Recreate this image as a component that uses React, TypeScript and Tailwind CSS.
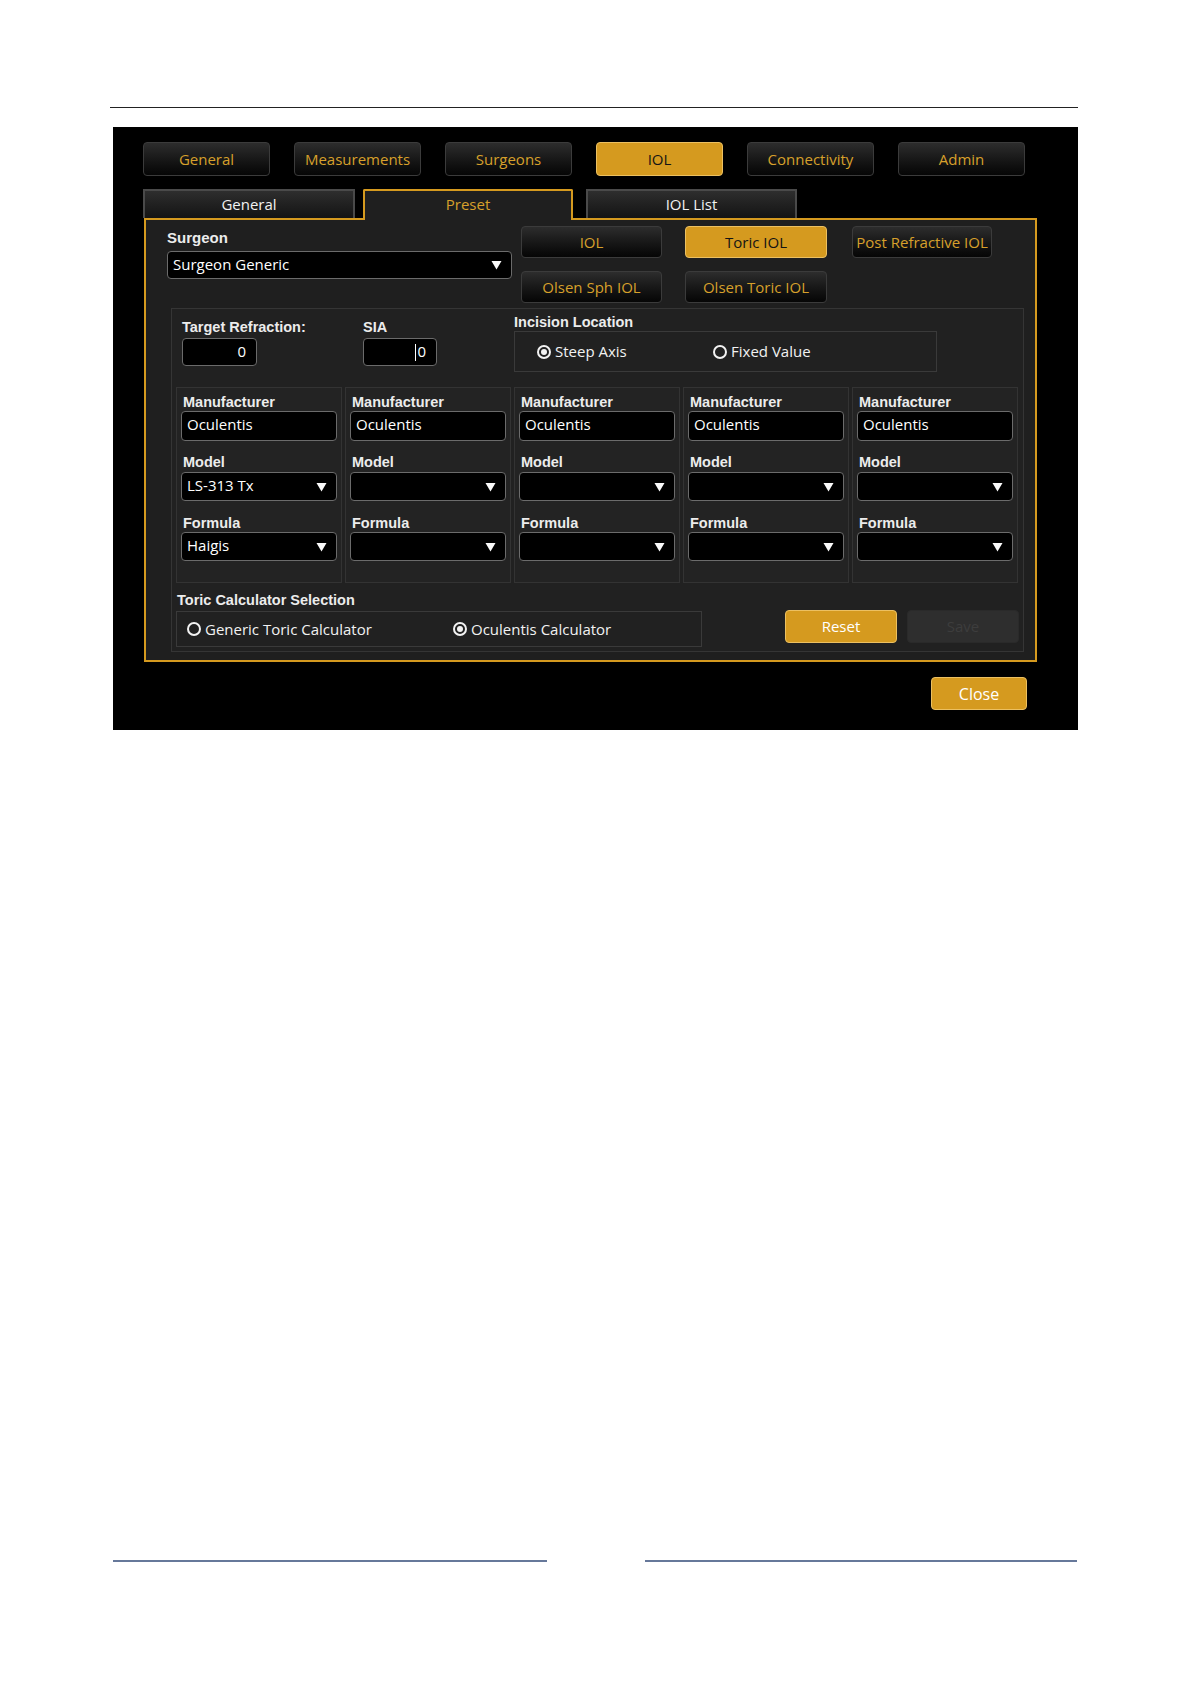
import React from 'react'

const ui = "font-['Open_Sans','Noto_Sans',sans-serif]"
const lbl = "font-['Liberation_Sans',Arial,sans-serif] font-bold text-[14.5px] leading-[15px] text-[#ececec]"

function DarkButton({ label, w, active, h = 'h-[34px]' }: { label: string; w: string; active?: boolean; h?: string }) {
  return (
    <div
      className={`${w} ${h} ${ui} flex items-center justify-center whitespace-nowrap rounded-[4px] text-[15px] ${
        active
          ? 'bg-[#d59a1f] border border-[#ecc061] text-[#141414]'
          : 'bg-gradient-to-b from-[#2d2d2d] to-[#060606] border border-[#3b3b3b] text-[#d7a02b]'
      }`}
    >
      {label}
    </div>
  )
}

function Arrow() {
  return (
    <svg width="11" height="10" viewBox="0 0 11 10" className="shrink-0">
      <polygon points="0.5,1 10.5,1 5.5,9.5" fill="#fafafa" />
    </svg>
  )
}

function Select({ value, w }: { value?: string; w: string }) {
  return (
    <div className={`${w} h-[29px] ${ui} flex items-center justify-between rounded-[4px] border border-[#6b6b6b] bg-black pl-[5px] pr-[9px] text-[15px] text-white`}>
      <span className="-mt-[3px]">{value}</span>
      <Arrow />
    </div>
  )
}

function Radio({ checked, label }: { checked?: boolean; label: string }) {
  return (
    <div className={`flex items-center gap-[4px] ${ui} text-[15px] text-[#f2f2f2]`}>
      <span className="flex h-[14px] w-[14px] items-center justify-center rounded-full border-2 border-[#f2f2f2]">
        {checked && <span className="h-[6px] w-[6px] rounded-full bg-[#f2f2f2]" />}
      </span>
      <span>{label}</span>
    </div>
  )
}

function LensColumn({ model, formula }: { model?: string; formula?: string }) {
  return (
    <div className="flex h-[196px] w-[166px] flex-col border border-[#333333] bg-[#232323] px-[4px] pt-[7px]">
      <div className={`${lbl} pl-[2px]`}>Manufacturer</div>
      <div className={`mt-[1px] h-[30px] w-[156px] ${ui} flex items-center rounded-[4px] border border-[#6b6b6b] bg-black pl-[5px] text-[15px] text-white`}>
        <span className="-mt-[3px]">Oculentis</span>
      </div>
      <div className={`${lbl} mt-[14px] pl-[2px]`}>Model</div>
      <div className="mt-[2px]">
        <Select value={model} w="w-[156px]" />
      </div>
      <div className={`${lbl} mt-[15px] pl-[2px]`}>Formula</div>
      <div className="mt-[1px]">
        <Select value={formula} w="w-[156px]" />
      </div>
    </div>
  )
}

function NumberBox({ w, caret }: { w: string; caret?: boolean }) {
  return (
    <div className={`${w} h-[28px] ${ui} flex items-center justify-end rounded-[4px] border border-[#6b6b6b] bg-black pr-[10px] text-[15px] text-white`}>
      {caret && <span className="mr-[1px] h-[17px] w-px bg-white" />}
      <span className="-mt-[2px]">0</span>
    </div>
  )
}

export default function App() {
  return (
    <div className="h-[1684px] w-[1191px] overflow-hidden bg-white pt-[107px]">
      <div className="ml-[110px] h-[1px] w-[968px] bg-[#222]" />

      {/* black settings window */}
      <div className="ml-[113px] mt-[19px] flex h-[603px] w-[965px] flex-col bg-black pl-[30px] pt-[15px]">
        <div className="flex gap-[24px]">
          <DarkButton label="General" w="w-[127px]" />
          <DarkButton label="Measurements" w="w-[127px]" />
          <DarkButton label="Surgeons" w="w-[127px]" />
          <DarkButton label="IOL" w="w-[127px]" active />
          <DarkButton label="Connectivity" w="w-[127px]" />
          <DarkButton label="Admin" w="w-[127px]" />
        </div>

        {/* sub tabs */}
        <div className={`mt-[13px] flex items-end ${ui} text-[15px]`}>
          <div className="flex h-[29px] w-[212px] items-center justify-center border-2 border-b-0 border-[#4a4a4a] bg-gradient-to-b from-[#2e2e2e] to-[#141414] text-[#f2f2f2]">
            General
          </div>
          <div className="relative z-10 ml-[8px] -mb-[2px] flex h-[31px] w-[210px] items-start justify-center rounded-t-[2px] border-2 border-b-0 border-[#d59a1f] bg-[#1f1f1f] pt-[2px] text-[#d7a02b]">
            Preset
          </div>
          <div className="ml-[13px] flex h-[29px] w-[211px] items-center justify-center border-2 border-b-0 border-[#4a4a4a] bg-gradient-to-b from-[#2e2e2e] to-[#141414] text-[#f2f2f2]">
            IOL List
          </div>
        </div>

        {/* orange frame */}
        <div className="ml-[1px] flex h-[444px] w-[893px] flex-col border-2 border-[#d59a1f] bg-[#1f1f1f]">
          <div className="flex pl-[21px] pt-[6px]">
            <div className="mt-[4px] w-[345px]">
              <div className="font-['Liberation_Sans',Arial,sans-serif] text-[15px] font-bold leading-[16px] text-[#ececec]">Surgeon</div>
              <div className={`mt-[5px] h-[28px] w-[345px] ${ui} flex items-center justify-between rounded-[4px] border border-[#6b6b6b] bg-black pl-[5px] pr-[9px] text-[15px] text-white`}>
                <span className="-mt-[2px]">Surgeon Generic</span>
                <Arrow />
              </div>
            </div>
            <div className="ml-[9px] flex flex-col gap-[13px]">
              <div className="flex">
                <DarkButton label="IOL" w="w-[141px]" h="h-[32px]" />
                <div className="ml-[23px]">
                  <DarkButton label="Toric IOL" w="w-[142px]" h="h-[32px]" active />
                </div>
                <div className="ml-[25px]">
                  <DarkButton label="Post Refractive IOL" w="w-[140px]" h="h-[32px]" />
                </div>
              </div>
              <div className="flex">
                <DarkButton label="Olsen Sph IOL" w="w-[141px]" h="h-[32px]" />
                <div className="ml-[23px]">
                  <DarkButton label="Olsen Toric IOL" w="w-[142px]" h="h-[32px]" />
                </div>
              </div>
            </div>
          </div>

          {/* group box */}
          <div className="ml-[25px] mt-[5px] flex h-[344px] w-[853px] flex-col border border-[#353535] bg-[#212121]">
            <div className="flex pt-[6px]">
              <div className="ml-[10px] mt-[5px] w-[181px]">
                <div className={lbl}>Target Refraction:</div>
                <div className="mt-[3px]">
                  <NumberBox w="w-[75px]" />
                </div>
              </div>
              <div className="mt-[5px] w-[151px]">
                <div className={lbl}>SIA</div>
                <div className="mt-[3px]">
                  <NumberBox w="w-[74px]" caret />
                </div>
              </div>
              <div>
                <div className={lbl}>Incision Location</div>
                <div className="mt-[1px] flex h-[41px] w-[423px] items-center border border-[#3a3a3a] pl-[22px]">
                  <div className="w-[176px]">
                    <Radio checked label="Steep Axis" />
                  </div>
                  <Radio label="Fixed Value" />
                </div>
              </div>
            </div>

            <div className="ml-[4px] mt-[15px] flex gap-[3px]">
              <LensColumn model="LS-313 Tx" formula="Haigis" />
              <LensColumn />
              <LensColumn />
              <LensColumn />
              <LensColumn />
            </div>

            <div className="ml-[4px] mt-[10px] flex">
              <div>
                <div className={`${lbl} pl-[1px]`}>Toric Calculator Selection</div>
                <div className="mt-[3px] flex h-[36px] w-[526px] items-center border border-[#3a3a3a] pl-[10px]">
                  <div className="w-[266px]">
                    <Radio label="Generic Toric Calculator" />
                  </div>
                  <Radio checked label="Oculentis Calculator" />
                </div>
              </div>
              <div className={`ml-[83px] mt-[17px] flex gap-[10px] ${ui} text-[15px]`}>
                <div className="flex h-[33px] w-[112px] items-center justify-center rounded-[4px] border border-[#ecc061] bg-[#d59a1f] text-white">
                  Reset
                </div>
                <div className="flex h-[33px] w-[112px] items-center justify-center rounded-[4px] border border-[#2a2a2a] bg-[#2e2e2e] text-[#3d3d3d]">
                  Save
                </div>
              </div>
            </div>
          </div>
        </div>

        <div className="mt-[15px] flex justify-end pr-[51px]">
          <div className={`flex h-[33px] w-[96px] items-center justify-center rounded-[4px] border border-[#ecc061] bg-[#d59a1f] ${ui} text-[16px] text-white`}>
            Close
          </div>
        </div>
      </div>

      {/* footer rules */}
      <div className="mt-[830px] flex">
        <div className="ml-[113px] h-[2px] w-[434px] bg-[#66789a]" />
        <div className="ml-[98px] h-[2px] w-[432px] bg-[#66789a]" />
      </div>
    </div>
  )
}
